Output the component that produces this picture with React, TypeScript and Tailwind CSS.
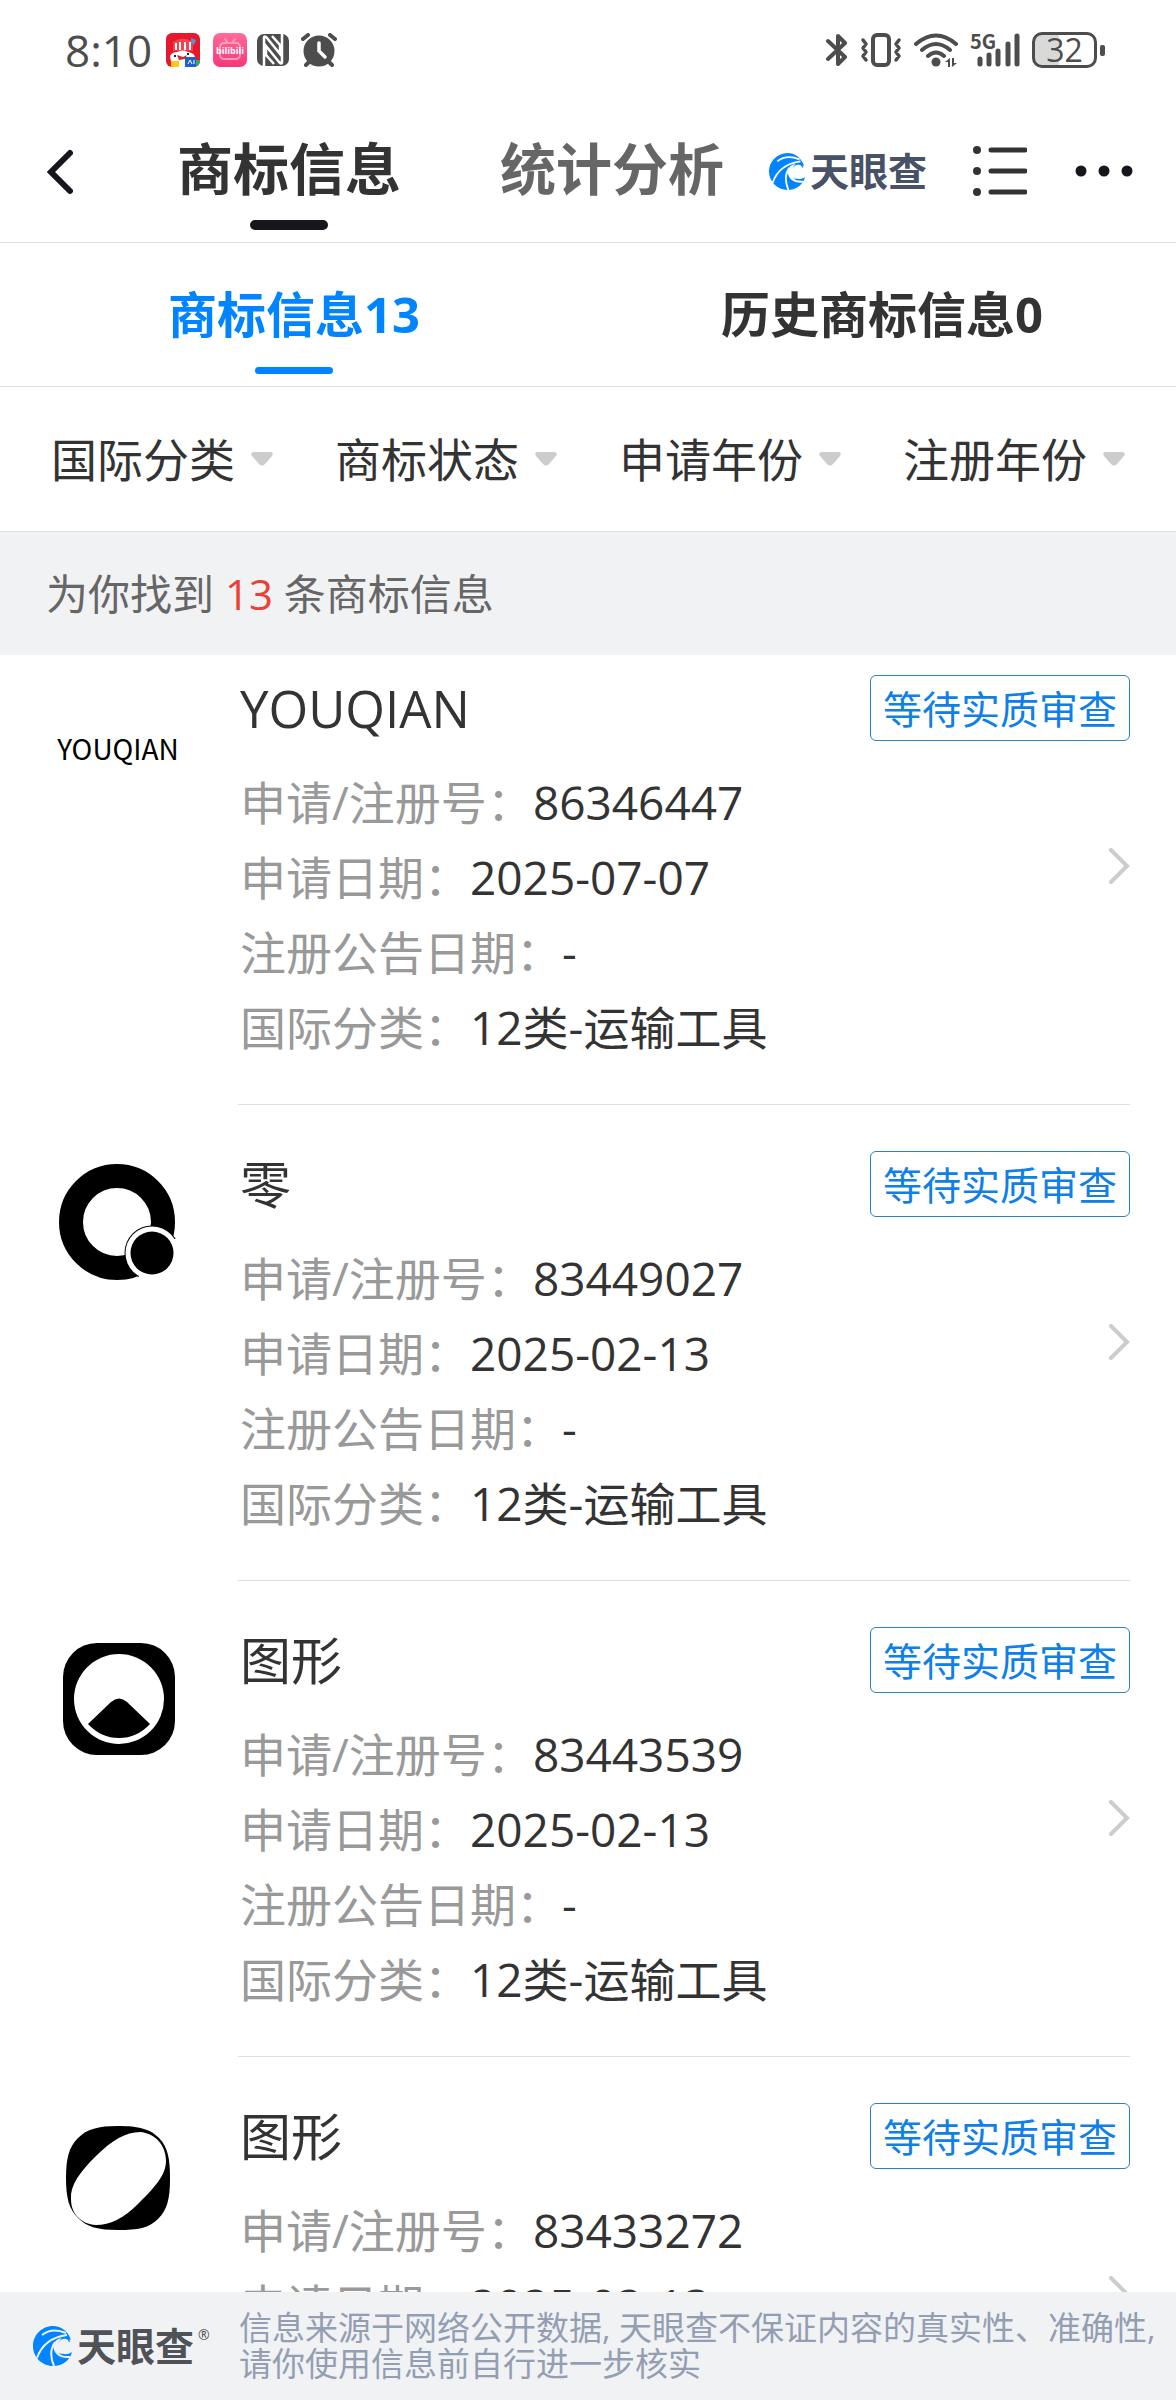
import React, { useState } from 'react';

interface Trademark {
  id: string;
  name: string;
  regNo: string;
  applyDate: string;
  noticeDate: string;
  category: string;
  status: string;
  mark: React.ReactNode;
}

// Trademark images
const WordMark = () => (
  <span className="font-['Noto_Sans_CJK_SC',sans-serif] text-[28px] leading-none text-black">YOUQIAN</span>
);

const RingMark = () => (
  <svg viewBox="0 0 120 120" className="w-full" aria-hidden="true">
    <circle cx="59" cy="58" r="46" fill="none" stroke="#000" strokeWidth="24" />
    <circle cx="94" cy="89" r="27.5" fill="#000" />
    <circle cx="94" cy="89" r="26.5" fill="#fff" />
    <path d="M116 75l6 0v45H80l1-8z" fill="#fff" />
    <circle cx="94" cy="89" r="21.5" fill="#000" />
  </svg>
);

const PeakMark = () => (
  <svg viewBox="0 0 120 120" className="w-full" aria-hidden="true">
    <rect x="5" y="3" width="112" height="112" rx="34" fill="#000" />
    <circle cx="61" cy="59" r="45" fill="#fff" />
    <path d="M30 84L53 62Q61 55 69 62L92 84Q79 98 61 98T30 84z" fill="#000" />
  </svg>
);

const CapsuleMark = () => (
  <svg viewBox="0 -4 120 120" className="w-full" aria-hidden="true">
    <path d="M60 6C81 6 92 9 101 18S112 39 112 59s-3 31-12 40-20 11-40 11-31-3-40-12S8 78 8 58s3-31 12-40S40 6 60 6z" fill="#000" />
    <path d="M13 79C12 65 22 52 38 36S68 12 82 12c15 1 26 13 26 29 0 14-11 26-27 42S52 105 38 105C23 104 13 94 13 79z" fill="#fff" />
  </svg>
);

const TRADEMARKS: Trademark[] = [
  { id: '1', name: 'YOUQIAN', regNo: '86346447', applyDate: '2025-07-07', noticeDate: '-', category: '12类-运输工具', status: '等待实质审查', mark: <WordMark /> },
  { id: '2', name: '零', regNo: '83449027', applyDate: '2025-02-13', noticeDate: '-', category: '12类-运输工具', status: '等待实质审查', mark: <RingMark /> },
  { id: '3', name: '图形', regNo: '83443539', applyDate: '2025-02-13', noticeDate: '-', category: '12类-运输工具', status: '等待实质审查', mark: <PeakMark /> },
  { id: '4', name: '图形', regNo: '83433272', applyDate: '2025-02-13', noticeDate: '-', category: '12类-运输工具', status: '等待实质审查', mark: <CapsuleMark /> },
];

const PAGES = ['商标信息', '统计分析'];
const TABS = ['商标信息13', '历史商标信息0'];
const FILTERS = ['国际分类', '商标状态', '申请年份', '注册年份'];

const StatusBar = () => (
  <div className="flex h-[100px] shrink-0 items-center justify-between pl-[65px] pr-[71px] text-[#4d4d4d]">
    <div className="flex items-center">
      <span className="mr-[14px] text-[44px] leading-none">8:10</span>
      <svg viewBox="0 0 34 34" className="mr-[13px] size-[34px]" aria-hidden="true">
        <clipPath id="shop"><rect width="34" height="34" rx="6" /></clipPath>
        <g clipPath="url(#shop)">
          <rect width="34" height="34" fill="#e5182d" />
          <path d="M7 9Q17 2 27 9v9H7z" fill="#f0444e" />
          <path d="M10 10v7M14 9v8M19 9v8M24 9v8" stroke="#fff" strokeWidth="2" />
          <path d="M25 5l5 2-2 5-3-3z" fill="#5b8fd6" />
          <path d="M4 23q2-4 7-4 6-3 11 0 7 1 7 6l-3 9H6z" fill="#fff" />
          <path d="M11 22l6 2 4-2-2 4-6 1z" fill="#d8281f" />
          <path d="M8 23h2M21 21h2" stroke="#222" strokeWidth="2" />
          <rect x="5" y="28" width="8" height="6" fill="#ffc815" />
          <rect x="19" y="24" width="11" height="10" fill="#1e62d0" />
          <path d="M22 31l2-4 2 4m2-4v4" stroke="#fff" fill="none" />
          <rect x="30" y="27" width="4" height="7" fill="#39a75a" />
        </g>
      </svg>
      <svg viewBox="0 0 34 34" className="mr-[10px] size-[34px]" aria-hidden="true">
        <linearGradient id="pink" x2="0" y2="1">
          <stop stopColor="#ff6b9b" />
          <stop offset="1" stopColor="#fb3577" />
        </linearGradient>
        <rect width="34" height="34" rx="7" fill="url(#pink)" />
        <path d="M12 6l3 4m7-4l-3 4" stroke="#ff9dbd" strokeWidth="2" strokeLinecap="round" />
        <rect x="7" y="10" width="20" height="16" rx="4" fill="none" stroke="#ff9dbd" strokeWidth="2" />
        <text x="17" y="21" textAnchor="middle" fontSize="9" fontWeight="700" fill="#fff">bilibili</text>
      </svg>
      <svg viewBox="0 0 32 34" className="mr-[12px] h-[34px] w-[32px]" aria-hidden="true">
        <rect y="1" width="32" height="32" rx="7" fill="#4d4d4d" />
        <path d="M7 34V5q0-3 3 0l13 16V12l-8-9M25 0v29q0 3-3 0L9 13v9l8 9" fill="none" stroke="#fff" strokeWidth="2.500" />
      </svg>
      <svg viewBox="0 0 36 34" className="h-[34px] w-[36px]" aria-hidden="true">
        <circle cx="18" cy="18" r="15.500" fill="#4d4d4d" />
        <path d="M2 6l5-4M34 6l-5-4M5 32l5-5M31 32l-5-5" stroke="#4d4d4d" strokeWidth="4" strokeLinecap="round" />
        <path d="M18 10v8l6 6" fill="none" stroke="#fff" strokeWidth="3.500" strokeLinecap="round" strokeLinejoin="round" />
      </svg>
    </div>
    <div className="flex items-center">
      <svg viewBox="0 0 22 34" className="mr-[12px] h-[34px] w-[22px]" fill="none" stroke="currentColor" strokeWidth="4" strokeLinecap="round" strokeLinejoin="round" aria-hidden="true">
        <path d="M2 8l17 16-7 7V3l7 7L2 26" />
      </svg>
      <svg viewBox="0 0 42 34" className="mr-[12px] h-[34px] w-[42px]" fill="none" stroke="currentColor" strokeWidth="3.500" strokeLinecap="round" strokeLinejoin="round" aria-hidden="true">
        <rect x="13" y="2" width="16" height="30" rx="4" strokeWidth="4" />
        <path d="M3 7l3 4-3 4 3 4-3 4 3 4M39 7l-3 4 3 4-3 4 3 4-3 4" />
      </svg>
      <svg viewBox="0 0 44 34" className="mr-[12px] h-[34px] w-[44px]" fill="none" stroke="currentColor" strokeWidth="4" strokeLinecap="round" aria-hidden="true">
        <path d="M2 11Q22-6 42 11M8 17q14-12 28 0M14 23q8-7 16 0" />
        <circle cx="22" cy="29" r="4.500" fill="currentColor" stroke="none" />
        <path d="M36 25v9h-2v-5h-3zM38 34v-9h2v5h3z" fill="currentColor" stroke="none" />
      </svg>
      <svg viewBox="0 0 50 34" className="mr-[12px] h-[34px] w-[50px] overflow-visible" aria-hidden="true">
        <text x="0" y="16" fontSize="20" fontWeight="700" fill="currentColor" className="font-['Noto_Sans_CJK_SC',sans-serif]">5G</text>
        <path d="M10 26v5M19 22v9M28 18v13M38 11v20M47 3v28" stroke="currentColor" strokeWidth="5" strokeLinecap="round" />
      </svg>
      <div className="flex h-[36px] w-[65px] items-center justify-center rounded-[10px] border-[3px] border-[#4d4d4d] bg-linear-to-r from-[#d9d9d9] from-40% to-white to-40% text-[32px] font-medium leading-none">32</div>
      <span className="ml-[3px] h-[11px] w-[5px] rounded-[2px] bg-[#4d4d4d]" />
    </div>
  </div>
);

const BrandIcon = ({ className, swirl }: { className: string; swirl: string }) => (
  <svg viewBox="0 0 40 40" className={className} aria-hidden="true">
    <path d="M38 14C35 5 28 0 20 0 9 0 0 9 0 20s9 20 20 20c10 0 17-6 19-14-6 4-12 2-14-2-2-5 0-9 5-11 3-1 5 0 6 3 2-1 2-1 2-2z" fill="#0084ff" />
    <path d="M9 9Q19 1 33 7M4 32Q11 12 34 9M21 40Q15 26 22 16" fill="none" stroke={swirl} strokeWidth="2" />
    <path d="M21 19q1 13 16 12" fill="none" stroke={swirl} strokeWidth="2" />
    <path d="M29 12q-8 1-8 8 1 8 9 8-5-3-5-8t4-8z" fill={swirl} />
    <path d="M36 14q5 3 3 9l3 0V12z" fill={swirl} />
  </svg>
);

const Header = ({ active, onChange }: { active: string; onChange: (page: string) => void }) => (
  <header className="flex h-[143px] shrink-0 items-stretch border-b border-[#dedfe1] pl-[46px] pr-[43px]">
    <button type="button" aria-label="返回" className="mr-[103px] pt-px">
      <svg viewBox="0 0 28 46" className="h-[46px] w-[28px]" fill="none" stroke="#15171c" strokeWidth="6" strokeLinecap="round" aria-hidden="true">
        <path d="M24 4L5 23l19 19" strokeLinejoin="miter" />
      </svg>
    </button>
    <nav className="flex gap-[99px]">
      {PAGES.map(page => (
        <button
          key={page}
          type="button"
          onClick={() => onChange(page)}
          className="flex flex-col items-center justify-end pb-[12px]"
        >
          <span className={`text-[56px] font-bold leading-[64px] ${active === page ? 'text-[#333333]' : 'text-[#666666]'}`}>{page}</span>
          <span className={`mt-[20px] h-[10px] w-[78px] rounded-full ${active === page ? 'bg-[#15171c]' : 'bg-transparent'}`} />
        </button>
      ))}
    </nav>
    <div className="ml-auto flex items-center">
      <a href="#home" className="mr-[46px] flex items-center gap-[4px]">
        <BrandIcon className="size-[37px]" swirl="#ffffff" />
        <span className="text-[39px] font-bold leading-[38px] text-[#475266]">天眼查</span>
      </a>
      <button type="button" aria-label="列表" className="mr-[48px]">
        <svg viewBox="0 0 54 50" className="h-[50px] w-[54px]" aria-hidden="true">
          <g fill="#333">
            <circle cx="4" cy="4" r="4" />
            <circle cx="4" cy="25" r="4" />
            <circle cx="4" cy="46" r="4" />
          </g>
          <path d="M18 4h34M18 25h34M18 46h34" stroke="#333" strokeWidth="5" strokeLinecap="round" />
        </svg>
      </button>
      <button type="button" aria-label="更多">
        <svg viewBox="0 0 58 12" className="h-[12px] w-[58px]" fill="#15171c" aria-hidden="true">
          <circle cx="6" cy="6" r="5.500" />
          <circle cx="29" cy="6" r="5.500" />
          <circle cx="52" cy="6" r="5.500" />
        </svg>
      </button>
    </div>
  </header>
);

const Field = ({ label, value }: { label: string; value: string }) => (
  <div className="flex leading-[75px]">
    <dt className="text-[#999999]">{label}：</dt>
    <dd className="text-[#333333]">{value}</dd>
  </div>
);

const TrademarkCard = ({ item }: { item: Trademark }) => (
  <li className="flex pl-[58px] pr-[46px]">
    <div className="mr-[60px] mt-[59px] flex size-[120px] shrink-0 items-center justify-center">{item.mark}</div>
    <div className="flex-1 border-b border-[#dedfe1] pb-[39px] pt-[46px]">
      <div className="flex h-[66px] items-center justify-between pl-[2px]">
        <h2 className="text-[51px] leading-[66px] text-[#333333]">{item.name}</h2>
        <span className="flex h-[66px] items-center rounded-[6px] border border-[#2b7fc4] px-[12px] text-[39px] leading-none text-[#0f80e8]">{item.status}</span>
      </div>
      <div className="mt-[24px] flex items-start justify-between pl-[2px]">
        <dl className="text-[46px]">
          <Field label="申请/注册号" value={item.regNo} />
          <Field label="申请日期" value={item.applyDate} />
          <Field label="注册公告日期" value={item.noticeDate} />
          <Field label="国际分类" value={item.category} />
        </dl>
        <svg viewBox="0 0 22 36" className="mt-[83px] h-[36px] w-[22px]" fill="none" stroke="#cccccc" strokeWidth="4" strokeLinecap="round" aria-hidden="true">
          <path d="M3 2l16 16L3 34" />
        </svg>
      </div>
    </div>
  </li>
);

const App: React.FC = () => {
  const [page, setPage] = useState(PAGES[0]);
  const [tab, setTab] = useState(TABS[0]);

  return (
    <div className="flex h-screen flex-col bg-white font-['Open_Sans','Noto_Sans_CJK_SC',sans-serif]">
      <StatusBar />
      <Header active={page} onChange={setPage} />

      <div role="tablist" className="grid h-[144px] shrink-0 grid-cols-2 border-b border-[#dedfe1]">
        {TABS.map(name => (
          <button
            key={name}
            type="button"
            role="tab"
            aria-selected={tab === name}
            onClick={() => setTab(name)}
            className="flex flex-col items-center justify-end pb-[12px]"
          >
            <span className={`text-[49px] font-bold leading-[56px] ${tab === name ? 'text-[#0084ff]' : 'text-[#333333]'}`}>{name}</span>
            <span className={`mt-[25px] h-[7px] w-[78px] rounded-full ${tab === name ? 'bg-[#0084ff]' : 'bg-transparent'}`} />
          </button>
        ))}
      </div>

      <div className="grid h-[145px] shrink-0 grid-cols-4 border-b border-[#dedfe1] px-[20px]">
        {FILTERS.map(name => (
          <label key={name} className="flex items-center justify-center gap-[16px]">
            <select aria-label={name} className="appearance-none bg-transparent text-[46px] leading-[64px] text-[#333333] outline-none">
              <option>{name}</option>
            </select>
            <svg viewBox="0 0 22 14" className="h-[14px] w-[22px]" fill="#cccccc" aria-hidden="true">
              <path d="M2 0h18q3 1 1 4l-7 8q-3 3-6 0L1 4Q-1 1 2 0z" />
            </svg>
          </label>
        ))}
      </div>

      <p className="flex h-[123px] shrink-0 items-center whitespace-pre bg-[#f1f2f4] px-[46px] text-[42px] text-[#666666]">
        为你找到 <span className="text-[#eb4034]">13</span> 条商标信息
      </p>

      <main className="min-h-0 flex-1 overflow-y-auto [scrollbar-width:none]">
        <ul className="-mt-[26px]">
          {TRADEMARKS.map(item => (
            <TrademarkCard key={item.id} item={item} />
          ))}
        </ul>
      </main>

      <footer className="flex h-[108px] shrink-0 items-center bg-[#f1f2f4] pl-[33px]">
        <div className="flex w-[206px] shrink-0 items-center">
          <BrandIcon className="mr-[4px] size-[40px]" swirl="#f1f2f4" />
          <span className="text-[39px] font-bold leading-[40px] text-[#4f5257]">天眼查</span>
          <span className="-mt-[22px] ml-[4px] text-[14px] leading-none text-[#4f5257]">®</span>
        </div>
        <p className="text-[33px] leading-[36px] text-[#949eb3]">
          信息来源于网络公开数据, 天眼查不保证内容的真实性、准确性,
          <br />
          请你使用信息前自行进一步核实
        </p>
      </footer>
    </div>
  );
};

export default App;
